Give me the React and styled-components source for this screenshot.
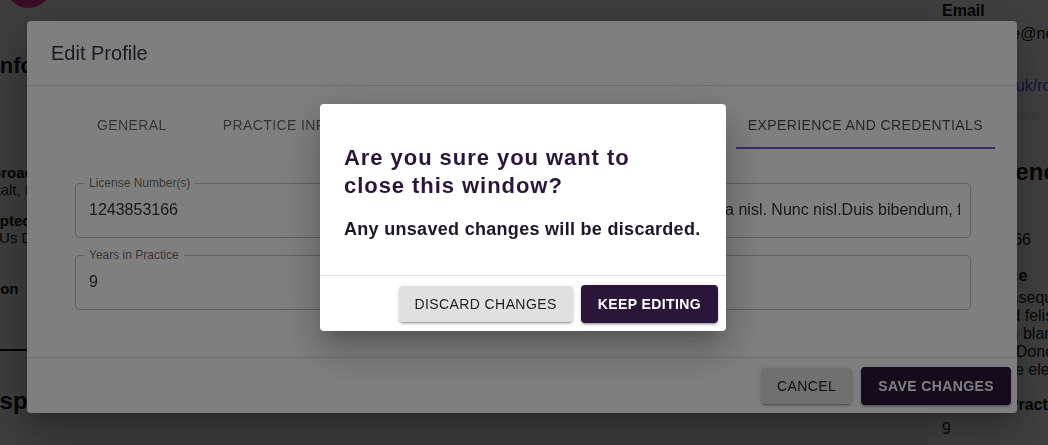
import React from 'react'
import styled, { createGlobalStyle } from 'styled-components'

const GlobalStyle = createGlobalStyle`
  html, body {
    margin: 0;
    padding: 0;
    overflow: hidden;
    background: #f4f4f4;
    font-family: "Liberation Sans", Arial, sans-serif;
    color: #222;
  }
  * { box-sizing: border-box; }
`

const Page = styled.div`
  display: grid;
  grid-template-columns: 956px 120px;
  width: 1076px;
  height: 445px;
  margin-left: -28px;
  overflow: hidden;
`

const MainColumn = styled.div`
  display: flex;
  flex-direction: column;
  align-items: flex-start;
`

const Avatar = styled.div`
  width: 47px;
  height: 47px;
  border-radius: 50%;
  background: #e83c94;
  margin: -39px 0 0 33px;
`

const SectionTitle = styled.h2`
  margin: ${p => p.$gap || 0}px 0 0 ${p => p.$indent || 0}px;
  font-size: ${p => p.$size || 22}px;
  line-height: 28px;
  font-weight: 700;
  color: #1c1424;
  white-space: nowrap;
`

const InfoLabel = styled.div`
  margin: ${p => p.$gap || 0}px 0 0 ${p => p.$indent || 0}px;
  font-size: 15px;
  line-height: 17px;
  font-weight: 700;
  color: #111;
  white-space: nowrap;
`

const InfoValue = styled.div`
  margin-left: ${p => p.$indent || 0}px;
  font-size: 15px;
  line-height: 17px;
  color: #222;
  white-space: nowrap;
`

const Rule = styled.hr`
  align-self: stretch;
  margin: 52px 0 0;
  border: 0;
  height: 2px;
  background: #111;
`

const Sidebar = styled.aside`
  display: flex;
  flex-direction: column;
  gap: 8px;
  min-width: 0;
`

const SideCard = styled.section`
  background: #fff;
  padding: ${p => p.$pad};
  margin-top: ${p => p.$offset || 0}px;
  flex: ${p => (p.$grow ? 1 : 'none')};
  overflow: hidden;
`

const SideTitle = styled.h3`
  margin: 0;
  font-size: 24px;
  line-height: 28px;
  font-weight: 700;
  color: #1c1424;
  white-space: nowrap;
`

const SideLabel = styled.div`
  margin-top: ${p => p.$gap || 0}px;
  font-size: 16px;
  line-height: 20px;
  font-weight: 700;
  color: #111;
  white-space: nowrap;
`

const SideValue = styled.div`
  margin-top: ${p => p.$gap || 3}px;
  font-size: 16px;
  line-height: 20px;
  color: #222;
  white-space: nowrap;
`

const SideLink = styled.a`
  display: block;
  margin-top: 3px;
  font-size: 16px;
  line-height: 20px;
  color: #3a5fd6;
  text-decoration: none;
  white-space: nowrap;
`

const Paragraph = styled.p`
  margin: 3px 0 0;
  font-size: 16px;
  line-height: 18px;
  color: #222;
  white-space: nowrap;
`

const Backdrop = styled.div`
  position: fixed;
  inset: 0;
  display: flex;
  align-items: center;
  justify-content: center;
  padding: 0 ${p => p.$shiftX}px ${p => p.$shiftY}px 0;
  background: rgba(0, 0, 0, 0.5);
`

const dialogShadow = `0px 11px 15px -7px rgba(0,0,0,0.2), 0px 24px 38px 3px rgba(0,0,0,0.14), 0px 9px 46px 8px rgba(0,0,0,0.12)`
const buttonShadow = `0px 3px 1px -2px rgba(0,0,0,0.2), 0px 2px 2px 0px rgba(0,0,0,0.14), 0px 1px 5px 0px rgba(0,0,0,0.12)`

const EditDialog = styled.div`
  width: 990px;
  height: 392px;
  display: flex;
  flex-direction: column;
  background: #fff;
  border-radius: 4px;
  box-shadow: ${dialogShadow};
`

const DialogHeader = styled.h2`
  margin: 0;
  padding: 16px 24px;
  font-size: 20px;
  line-height: 32px;
  font-weight: 400;
  color: #3d3048;
  border-bottom: 1px solid rgba(0, 0, 0, 0.12);
`

const DialogBody = styled.div`
  flex: 1;
  padding: 15px 46px 0 48px;
`

const TabList = styled.div`
  display: flex;
  gap: 32px;
  margin: 0 -24px 0 10px;
`

const Tab = styled.button`
  height: 48px;
  padding: 0 12px;
  border: 0;
  background: none;
  font-family: inherit;
  font-size: 14px;
  letter-spacing: 0.4px;
  text-transform: uppercase;
  white-space: nowrap;
  color: ${p => (p.$active ? 'rgba(0,0,0,0.72)' : 'rgba(0,0,0,0.6)')};
  box-shadow: ${p => (p.$active ? 'inset 0 -2px 0 #7d55d0' : 'none')};
  margin-left: ${p => (p.$end ? 'auto' : '0')};
`

const FieldGrid = styled.div`
  display: grid;
  grid-template-columns: minmax(0, 1fr) minmax(0, 1fr);
  column-gap: 24px;
  row-gap: 17px;
  margin-top: 34px;
`

const Field = styled.div`
  position: relative;
  height: 55px;
  min-width: 0;
  border: 1px solid #c4c4c4;
  border-radius: 4px;
  display: flex;
  align-items: center;
  padding: 0 10px 3px 13px;
`

const FieldLegend = styled.span`
  position: absolute;
  top: -9px;
  left: 8px;
  padding: 0 5px;
  background: #fff;
  font-size: 12px;
  line-height: 16px;
  color: rgba(0, 0, 0, 0.6);
  white-space: nowrap;
`

const FieldValue = styled.span`
  flex: 1;
  min-width: 0;
  font-size: 16px;
  line-height: 19px;
  color: rgba(0, 0, 0, 0.82);
  white-space: nowrap;
  overflow: hidden;
`

const DialogFooter = styled.div`
  height: 56px;
  display: flex;
  align-items: center;
  justify-content: flex-end;
  gap: ${p => p.$gap}px;
  padding: 0 ${p => p.$right}px 0 0;
  border-top: 1px solid rgba(0, 0, 0, 0.12);
`

const Button = styled.button`
  height: ${p => (p.$primary ? 38 : 36)}px;
  padding: 0 ${p => (p.$primary ? 17 : 16)}px;
  border: 0;
  border-radius: 4px;
  font-family: inherit;
  font-size: 14px;
  font-weight: ${p => (p.$primary ? 700 : 400)};
  letter-spacing: 0.4px;
  text-transform: uppercase;
  white-space: nowrap;
  background: ${p => (p.$primary ? '#2a1639' : '#e0e0e0')};
  color: ${p => (p.$primary ? '#fff' : 'rgba(0,0,0,0.87)')};
  box-shadow: ${buttonShadow};
`

const ConfirmDialog = styled.div`
  width: 406px;
  background: #fff;
  border-radius: 4px;
  box-shadow: ${dialogShadow};
`

const ConfirmBody = styled.div`
  padding: 40px 24px 35px;
`

const ConfirmTitle = styled.h2`
  margin: 0;
  max-width: 320px;
  font-size: 22px;
  line-height: 28px;
  letter-spacing: 0.95px;
  font-weight: 700;
  color: #2a1639;
`

const ConfirmText = styled.p`
  margin: 18px 0 0;
  font-size: 18px;
  line-height: 22px;
  letter-spacing: 0.3px;
  font-weight: 700;
  color: #1e1528;
  white-space: nowrap;
`

const tabs = ['General', 'Practice Information', 'Specialties and Services', 'Experience and Credentials']

export default function App() {
  return (
    <>
      <GlobalStyle />
      <Page>
        <MainColumn>
          <Avatar />
          <SectionTitle $gap={44} $indent={-70}>Practice Info</SectionTitle>
          <InfoLabel $gap={84}>Approach</InfoLabel>
          <InfoValue $indent={-3}>Gestalt, Integrative</InfoValue>
          <InfoLabel $gap={14} $indent={-8}>Accepted</InfoLabel>
          <InfoValue $indent={-6}>Pay, Us Direct</InfoValue>
          <InfoLabel $gap={34} $indent={-16}>Location</InfoLabel>
          <Rule />
          <SectionTitle $gap={36} $indent={-32} $size={24}>Workspace</SectionTitle>
        </MainColumn>

        <Sidebar>
          <SideCard $offset={-30} $pad="31px 14px 16px">
            <SideLabel>Email</SideLabel>
            <SideValue>contact.me@nextup.co.uk</SideValue>
            <SideLabel $gap={9}>Website</SideLabel>
            <SideLink href="#">nextup.co.uk/roberts</SideLink>
          </SideCard>
          <SideCard $grow $pad="38px 14px 0">
            <SideTitle>Experience</SideTitle>
            <SideLabel $gap={21}>License</SideLabel>
            <SideValue>1243853166</SideValue>
            <SideLabel $gap={16}>Experience</SideLabel>
            <Paragraph>
              Donec consequat ipsum<br />
              Mauris sed felis amet<br />
              Quisque in blandit<br />
              Nulla nisl. Donec at<br />
              Fusce vitae eleifend
            </Paragraph>
            <SideLabel $gap={16}>Years in Practice</SideLabel>
            <SideValue $gap={4}>9</SideValue>
          </SideCard>
        </Sidebar>
      </Page>

      <Backdrop $shiftX={4} $shiftY={11}>
        <EditDialog>
          <DialogHeader>Edit Profile</DialogHeader>
          <DialogBody>
            <TabList>
              {tabs.map((t, i) => (
                <Tab key={t} $active={i === tabs.length - 1} $end={i === tabs.length - 1}>
                  {t}
                </Tab>
              ))}
            </TabList>
            <FieldGrid>
              <Field>
                <FieldLegend>License Number(s)</FieldLegend>
                <FieldValue>1243853166</FieldValue>
              </Field>
              <Field>
                <FieldLegend>Credentials</FieldLegend>
                <FieldValue>
                  Praesent dignissim, erat a nisl. Nunc nisl.Duis bibendum, felis sed interdum venenatis, turpis enim blandit mi.
                </FieldValue>
              </Field>
              <Field>
                <FieldLegend>Years in Practice</FieldLegend>
                <FieldValue>9</FieldValue>
              </Field>
              <Field>
                <FieldLegend>Education</FieldLegend>
                <FieldValue></FieldValue>
              </Field>
            </FieldGrid>
          </DialogBody>
          <DialogFooter $gap={9} $right={6}>
            <Button>Cancel</Button>
            <Button $primary>Save Changes</Button>
          </DialogFooter>
        </EditDialog>
      </Backdrop>

      <Backdrop $shiftX={2} $shiftY={10}>
        <ConfirmDialog>
          <ConfirmBody>
            <ConfirmTitle>Are you sure you want to close this window?</ConfirmTitle>
            <ConfirmText>Any unsaved changes will be discarded.</ConfirmText>
          </ConfirmBody>
          <DialogFooter $gap={8} $right={8}>
            <Button>Discard Changes</Button>
            <Button $primary>Keep Editing</Button>
          </DialogFooter>
        </ConfirmDialog>
      </Backdrop>
    </>
  )
}
